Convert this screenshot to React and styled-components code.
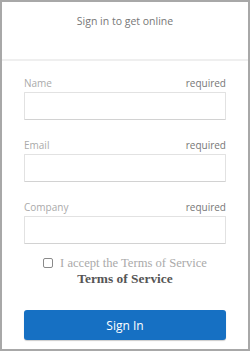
import React from "react";
import styled, { createGlobalStyle } from "styled-components";

const Global = createGlobalStyle`
  html, body { margin: 0; padding: 0; background: #fff; }
  * { box-sizing: border-box; }
`;

const Frame = styled.div`
  width: 250px;
  height: 351px;
  border: 2px solid #a8a8a8;
  background: #fff;
  font-family: "Open Sans", "Noto Sans", sans-serif;
  display: flex;
  flex-direction: column;
`;

const Header = styled.div`
  height: 59px;
  border-bottom: 2px solid #efefef;
  padding-top: 12px;
  text-align: center;
  font-size: 10.5px;
  line-height: 14px;
  color: #777;
`;

const Form = styled.form`
  padding: 15px 22px 0;
  display: flex;
  flex-direction: column;
`;

const Field = styled.div`
  display: flex;
  flex-direction: column;
  margin-bottom: 18px;
`;

const LabelRow = styled.div`
  display: flex;
  justify-content: space-between;
  align-items: flex-end;
  height: 14px;
  line-height: 14px;
  font-size: 10px;
`;

const Label = styled.label`
  color: #aaa;
`;

const Required = styled.span`
  color: #777;
`;

const Input = styled.input`
  margin-top: 2px;
  height: 28px;
  width: 100%;
  border: 1px solid #e2e2e2;
  border-bottom-color: #d2d2d2;
  border-radius: 1px;
  background: #fff;
  outline: none;
`;

const Terms = styled.div`
  margin-top: -6px;
  text-align: center;
  font-family: "Liberation Serif", "Times New Roman", serif;
  font-size: 12.6px;
  line-height: 15px;
  color: #aaa;
  white-space: nowrap;
`;

const Check = styled.span`
  display: inline-block;
  width: 10px;
  height: 10px;
  border: 1px solid #8a8a8a;
  border-radius: 2px;
  margin-right: 7px;
  vertical-align: -1px;
`;

const TermsBold = styled.div`
  font-weight: bold;
  color: #555;
  font-size: 13.4px;
  line-height: 15px;
`;

const Button = styled.button`
  margin-top: 24px;
  height: 30px;
  width: 100%;
  border: none;
  border-radius: 3px;
  background: #1670c3;
  color: #fff;
  font-family: "Open Sans", "Noto Sans", sans-serif;
  font-size: 12px;
  box-shadow: 0 1px 1px rgba(0,0,0,0.2);
`;

const fields = ["Name", "Email", "Company"];

export default function App() {
  return (
    <>
      <Global />
      <Frame>
        <Header>Sign in to get online</Header>
        <Form>
          {fields.map((f) => (
            <Field key={f}>
              <LabelRow>
                <Label>{f}</Label>
                <Required>required</Required>
              </LabelRow>
              <Input />
            </Field>
          ))}
          <Terms>
            <Check />I accept the Terms of Service
            <TermsBold>Terms of Service</TermsBold>
          </Terms>
          <Button type="button">Sign In</Button>
        </Form>
      </Frame>
    </>
  );
}
